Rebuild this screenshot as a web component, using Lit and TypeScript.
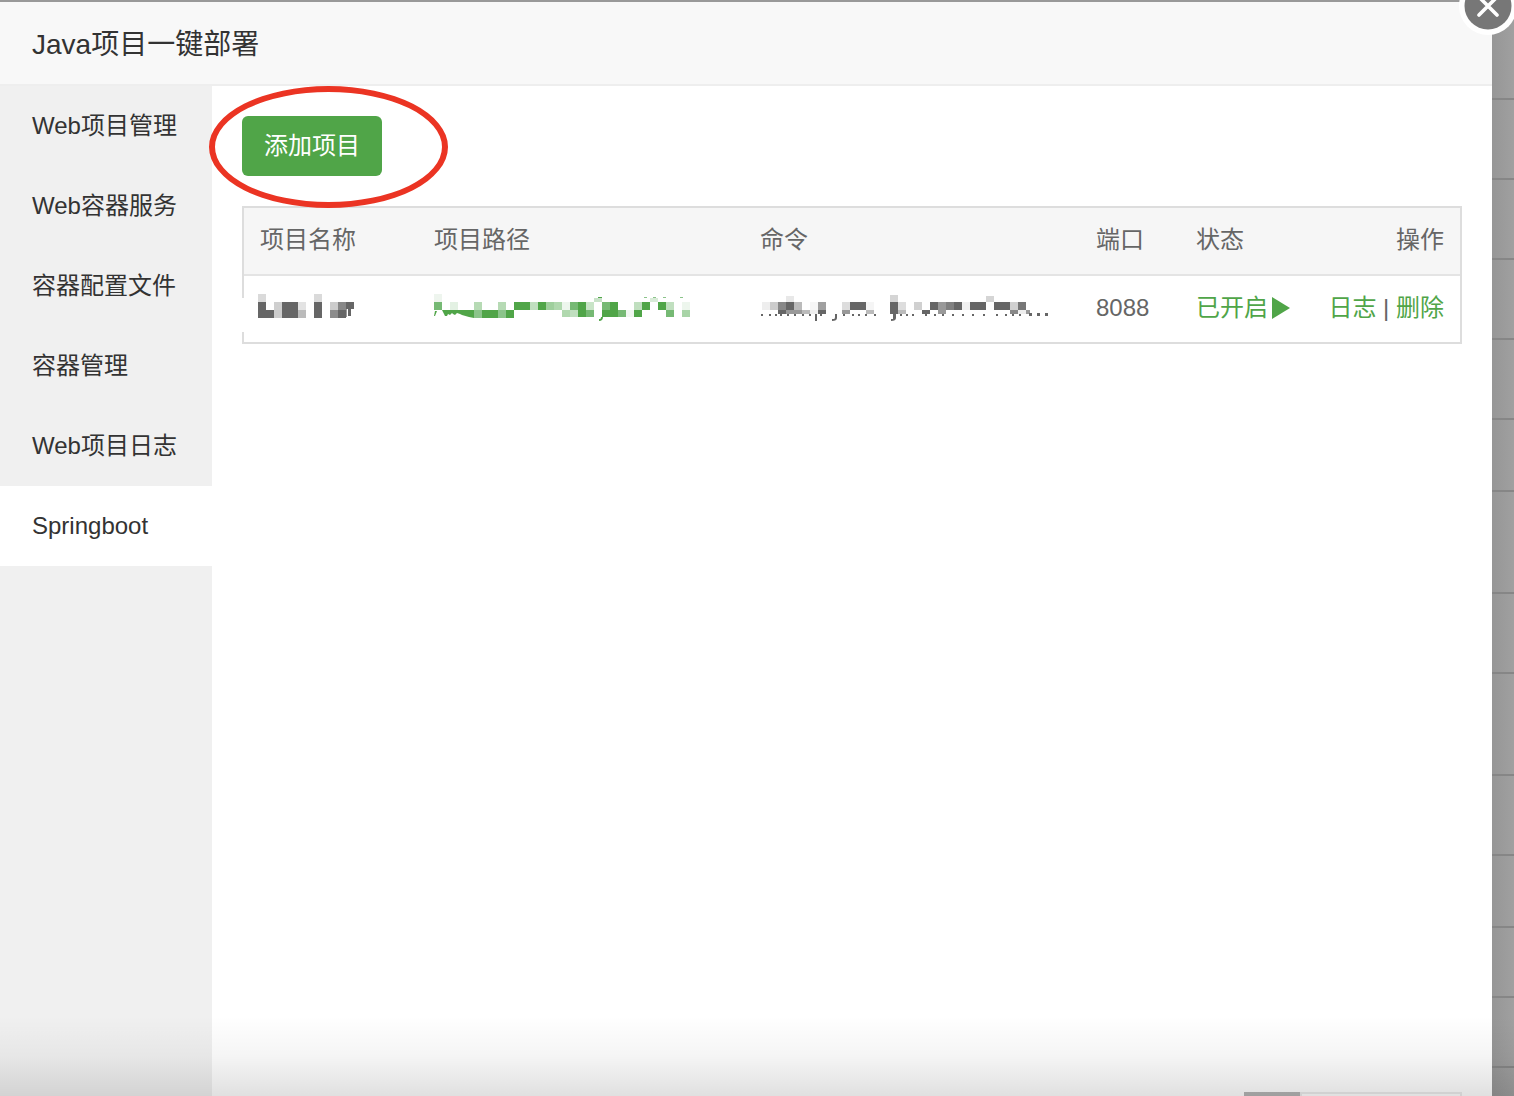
import { LitElement, html, svg, css } from "lit";
import { customElement, state } from "lit/decorators.js";
import { classMap } from "lit/directives/class-map.js";

// A block of a pixelated value: x, y, width, height, colour.
type Block = [number, number, number, number, string];

const G = "#50a548";
const D = "#666666";

// Turns the [x, colour] cells of one mosaic row into blocks 8px wide.
const cells = (y: number, h: number, list: [number, string][]): Block[] =>
  list.map(([x, c]) => [x, y, 8, h, c]);

const NAME: Block[] = [
  ...cells(2, 8, [[0, "#dadada"], [56, "#dadada"]]),
  ...cells(10, 8, [[0, D], [16, "#cfcfcf"], [24, D], [32, D], [40, "#e3e3e3"], [56, D], [72, "#cccccc"], [80, "#888888"]]),
  [88, 10, 8, 7, D],
  ...cells(18, 8, [[0, D], [8, D], [16, "#cccccc"], [24, D], [32, D], [40, "#bbbbbb"], [56, D], [72, "#8c8c8c"], [80, D]]),
  [88, 17, 1, 8, "#999999"],
  [90, 17, 3, 7, D],
];

const PATH: Block[] = [
  [0, 2, 8, 8, "#eef5ee"],
  [160, 6, 8, 4, "#c8e2c8"],
  [164, 5, 4, 1, G],
  [216, 6, 8, 4, "#d8ebd7"],
  [210, 5, 3, 1, "#8bc48a"],
  [219, 5, 3, 1, "#8bc48a"],
  [229, 5, 3, 1, "#8bc48a"],
  [246, 5, 3, 1, "#8bc48a"],
  ...cells(10, 8, [
    [0, "#76b974"], [16, "#e3f1e3"], [40, "#b6dab4"], [64, "#b6dab4"], [80, G], [88, G], [96, "#c0dfbf"],
    [104, G], [112, "#9fcf9d"], [120, "#b0d8ae"], [128, "#edf6ed"], [136, "#76b974"], [144, G],
    [152, "#c8e4c7"], [168, "#76b974"], [176, G], [200, "#c0dfbf"], [208, G], [224, G],
    [232, "#c0dfbf"], [248, "#edf6ed"],
  ]),
  ...cells(18, 8, [[40, "#8bc48a"], [48, G], [56, G], [64, "#8bc48a"], [72, G]]),
  ...cells(18, 7, [
    [128, "#b0d8ae"], [136, "#c0dfbf"], [144, G], [152, "#76b974"], [168, G], [176, G],
    [184, "#76b974"], [192, "#f0f6f0"], [200, G], [232, "#76b974"], [248, "#a8d4a7"],
  ]),
];

const COMMAND: Block[] = [
  [26, 4, 8, 6, "#e8e8e8"],
  [130, 3, 8, 7, "#d5d5d5"],
  [226, 4, 8, 6, "#d5d5d5"],
  ...cells(10, 8, [
    [2, "#eeeeee"], [10, "#cccccc"], [18, "#888888"], [26, D], [34, "#bbbbbb"], [50, "#f6f6f6"],
    [58, "#a0a0a0"], [82, "#dddddd"], [90, D], [98, D], [106, "#f5f5f5"], [130, D], [138, "#dddddd"],
    [154, "#d0d0d0"], [170, D], [178, "#999999"], [186, "#808080"], [194, D], [202, "#f0f0f0"],
    [210, D], [218, D], [234, D], [242, D], [250, "#d0d0d0"], [258, "#777777"],
  ]),
  ...cells(18, 4, [
    [18, D], [26, "#999999"], [34, "#999999"], [42, "#bbbbbb"], [50, "#eeeeee"], [58, D],
    [82, "#999999"], [106, "#bbbbbb"], [130, D], [138, "#bbbbbb"], [162, D], [178, "#999999"],
    [250, "#888888"], [258, "#eeeeee"],
  ]),
  [266, 18, 4, 4, "#999999"],
  ...[1, 9, 15, 20, 27, 34, 42, 49, 60, 83, 92, 98, 105, 114, 140, 146, 152, 165, 174, 182, 192, 202, 212, 223, 236, 245, 252, 259].map(
    (x): Block => [x, 22, 2, 2, D],
  ),
  [55, 22, 2, 7, D],
  [269, 21, 3, 3, D],
  [277, 21, 3, 3, D],
  [285, 21, 3, 3, D],
];

@customElement("mosaic-value")
class MosaicValue extends LitElement {
  static properties = { blocks: { attribute: false }, traces: { attribute: false }, tint: {} };
  declare blocks: Block[];
  declare traces: string;
  declare tint: string;
  static styles = css`
    :host { display: block; }
    .mosaic { display: block; width: 292px; height: 32px; overflow: visible; }
  `;
  render() {
    return html`<svg class="mosaic" viewBox="0 0 292 32" shape-rendering="crispEdges" aria-hidden="true">
      ${this.blocks.map(([x, y, w, h, c]) => svg`<rect x=${x} y=${y} width=${w} height=${h} fill=${c}></rect>`)}
      <path d=${this.traces ?? ""} fill=${this.tint ?? D} shape-rendering="auto"></path>
    </svg>`;
  }
}

@customElement("app-root")
class AppRoot extends LitElement {
  @state() private active = "Springboot";

  private menu = ["Web项目管理", "Web容器服务", "容器配置文件", "容器管理", "Web项目日志", "Springboot"];
  private backdropRows = [98, 78, 78, 78, 78, 70, 100, 78, 100, 78, 70, 68, 68, 68];

  static styles = css`
    :host {
      display: block;
      font-family: "Liberation Sans", "Noto Sans CJK SC", sans-serif;
      font-size: 24px;
      line-height: 32px;
      color: #333;
    }
    .screen {
      position: relative;
      display: flex;
      height: 100vh;
      overflow: hidden;
      background: #999;
    }
    .dialog { flex: 1; min-width: 0; display: flex; flex-direction: column; margin-top: 2px; background: #fff; }
    .title {
      margin: 0;
      padding: 24px 32px 20px;
      font-size: 28px;
      font-weight: 400;
      line-height: 38px;
      background: #f8f8f8;
      border-bottom: 2px solid #eee;
    }
    .body { flex: 1; min-height: 0; display: flex; }
    .menu { flex: none; width: 212px; background: #f0f0f0; }
    .item {
      display: block;
      width: 100%;
      height: 80px;
      padding: 0 0 0 32px;
      border: 0;
      background: none;
      font: inherit;
      color: inherit;
      text-align: left;
      cursor: pointer;
    }
    .item.on { background: #fff; }
    .main { flex: 1; min-width: 0; display: flex; flex-direction: column; padding: 30px 30px 0; }
    .toolbar { position: relative; align-self: flex-start; display: flex; margin-bottom: 30px; }
    .add {
      height: 60px;
      padding: 0 22px;
      border: 0;
      border-radius: 6px;
      background: #50a548;
      color: #fff;
      font: inherit;
      cursor: pointer;
    }
    .ring {
      position: absolute;
      left: -33px;
      top: -30px;
      width: 239px;
      height: 122px;
      box-sizing: border-box;
      border: 6px solid #eb3423;
      border-radius: 50%;
      pointer-events: none;
    }
    .table {
      width: 100%;
      table-layout: fixed;
      border-collapse: separate;
      border-spacing: 0;
      border: 2px solid #ddd;
      color: #666;
    }
    .table th, .table td { box-sizing: border-box; padding: 0 16px 2px; font-weight: 400; text-align: left; white-space: nowrap; }
    .table th { height: 68px; background: #f6f6f6; border-bottom: 2px solid #e4e4e4; }
    .table td { height: 66px; }
    .table .end { padding-left: 0; text-align: right; }
    .table .masked { padding-left: 14px; position: relative; }
    .masked::before { content: ""; position: absolute; left: -2px; top: 22px; width: 2px; height: 34px; background: #fff; }
    .name { width: 174px; }
    .path { width: 326px; }
    .port { width: 100px; }
    .status { width: 128px; }
    .ops { width: 152px; }
    .table td mosaic-value { width: 0; }
    .link { color: #50a548; text-decoration: none; }
    .state { display: flex; align-items: center; gap: 4px; }
    .play { width: 18px; height: 22px; }
    .pager { flex: none; display: flex; align-self: flex-end; width: 218px; height: 4px; margin-top: auto; overflow: hidden; }
    .current { width: 56px; height: 60px; background: #b5b5b5; }
    .pages { flex: 1; height: 60px; border: 2px solid #ececec; }
    .backdrop { flex: none; width: 22px; background: linear-gradient(to right, #969696, #a0a0a0); }
    .line { border-bottom: 2px solid #868686; }
    .shade {
      position: absolute;
      left: 0;
      right: 0;
      bottom: 0;
      height: 80px;
      background: linear-gradient(rgba(0, 0, 0, 0), rgba(0, 0, 0, 0.04) 50%, rgba(0, 0, 0, 0.12));
      pointer-events: none;
    }
    .close { position: absolute; top: -24px; right: -4px; width: 60px; height: 60px; padding: 0; border: 0; background: none; cursor: pointer; }
    .close svg { display: block; }
  `;

  render() {
    return html`<div class="screen">
      <section class="dialog" role="dialog" aria-labelledby="title">
        <h1 class="title" id="title">Java项目一键部署</h1>
        <div class="body">
          <nav class="menu">
            ${this.menu.map(
              (m) => html`<button class=${classMap({ item: true, on: m === this.active })} @click=${() => (this.active = m)}>${m}</button>`,
            )}
          </nav>
          <main class="main">
            <div class="toolbar">
              <button class="add">添加项目</button>
              <span class="ring"></span>
            </div>
            <table class="table">
              <thead>
                <tr>
                  <th class="name">项目名称</th>
                  <th class="path">项目路径</th>
                  <th>命令</th>
                  <th class="port">端口</th>
                  <th class="status">状态</th>
                  <th class="ops end">操作</th>
                </tr>
              </thead>
              <tbody>
                <tr>
                  <td class="masked"><mosaic-value .blocks=${NAME}></mosaic-value></td>
                  <td>
                    <mosaic-value
                      .blocks=${PATH}
                      .tint=${G}
                      .traces=${"M1 19h2l-2 5h-1zM8 18h32v8l-5-1-7-2-2-1-3-1-2 2-2-1-1-1-2 2-2-1-1 2h-2l-2-4zM168 25h1q0 4-4 4v-2h1q1 0 1-2z"}
                    ></mosaic-value>
                  </td>
                  <td>
                    <mosaic-value
                      .blocks=${COMMAND}
                      .traces=${"M75 22h2v4q0 3-5 3v-2h2q1 0 1-2zM133 22h3v4q0 3-5 3v-2h2z"}
                    ></mosaic-value>
                  </td>
                  <td>8088</td>
                  <td>
                    <a class="link state" href="#">已开启<svg class="play" viewBox="0 0 18 22" aria-hidden="true"><path d="M0 0L18 11L0 22z" fill="#50a548"></path></svg></a>
                  </td>
                  <td class="end"><a class="link" href="#">日志</a> | <a class="link" href="#">删除</a></td>
                </tr>
              </tbody>
            </table>
            <div class="pager"><span class="current"></span><span class="pages"></span></div>
          </main>
        </div>
      </section>
      <div class="backdrop">${this.backdropRows.map((h) => html`<div class="line" style="height:${h}px"></div>`)}</div>
      <div class="shade"></div>
      <button class="close" aria-label="关闭">
        <svg width="60" height="60" viewBox="0 0 60 60" aria-hidden="true">
          <circle cx="30" cy="30" r="29" fill="#fff"></circle>
          <circle cx="30" cy="30" r="23.5" fill="#777"></circle>
          <path d="M21 21L39 39M39 21L21 39" stroke="#fff" stroke-width="3.6" stroke-linecap="round"></path>
        </svg>
      </button>
    </div>`;
  }
}
